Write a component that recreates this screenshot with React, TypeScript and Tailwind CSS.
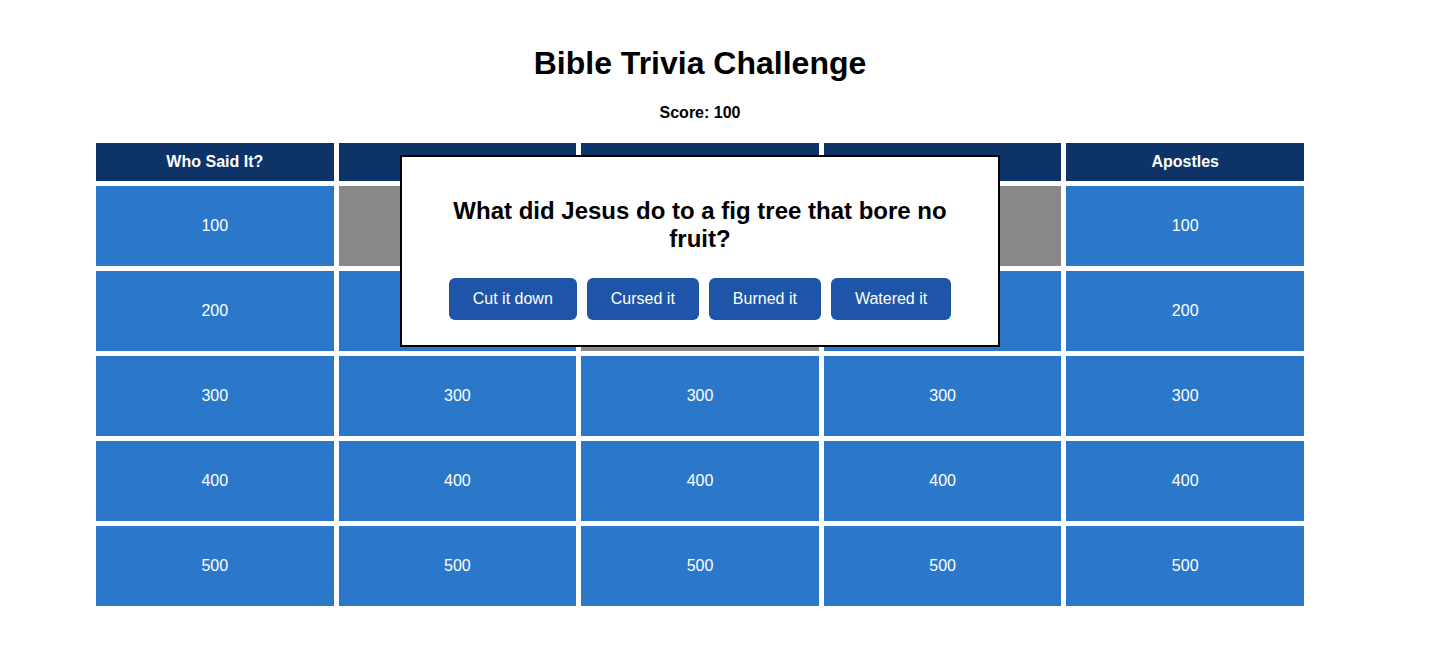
import React from "react";

const categories = ["Who Said It?", "Old Testament", "Miracles", "Parables", "Apostles"];
const values = [100, 200, 300, 400, 500];
const answered: Record<string, boolean> = {
  "1-100": true,
  "2-100": true,
  "3-100": true,
  "2-200": true,
};

export default function App() {
  return (
    <div className="bg-white min-h-[652px] w-[1451px]" style={{ fontFamily: '"Liberation Sans", Arial, Helvetica, sans-serif' }}>
      <div className="relative w-[1400px] pt-[45px] text-center text-black">
        <h1 className="text-[32px] leading-[37px] font-bold m-0">Bible Trivia Challenge</h1>
        <p className="mt-[22px] text-[16px] leading-[18px] font-bold">Score: 100</p>
        <div className="mx-auto mt-[21px] w-[1208px] grid grid-cols-5 gap-[5px]">
          {categories.map((c) => (
            <div key={c} className="bg-[#0e3369] text-white font-bold text-[16px] leading-[18px] py-[10px] flex items-center justify-center">
              {c}
            </div>
          ))}
          {values.map((v) =>
            categories.map((c, ci) => {
              const done = answered[`${ci}-${v}`];
              return (
                <div
                  key={`${c}-${v}`}
                  className={`h-[80px] flex items-center justify-center text-white text-[16px] ${done ? "bg-[#888888]" : "bg-[#2b78cb]"}`}
                >
                  {done ? "" : v}
                </div>
              );
            })
          )}
        </div>

        <div className="absolute left-[400px] top-[155px] w-[600px] bg-white border-2 border-black p-[20px] text-center">
          <h2 className="my-[20px] text-[24px] leading-[28px] font-bold text-black">
            What did Jesus do to a fig tree that bore no fruit?
          </h2>
          <div className="flex justify-center">
            {["Cut it down", "Cursed it", "Burned it", "Watered it"].map((a) => (
              <button
                key={a}
                className="m-[5px] px-6 py-3 text-[16px] leading-[18px] text-white bg-[#1f55a8] rounded-[6px]"
              >
                {a}
              </button>
            ))}
          </div>
        </div>
      </div>
    </div>
  );
}
